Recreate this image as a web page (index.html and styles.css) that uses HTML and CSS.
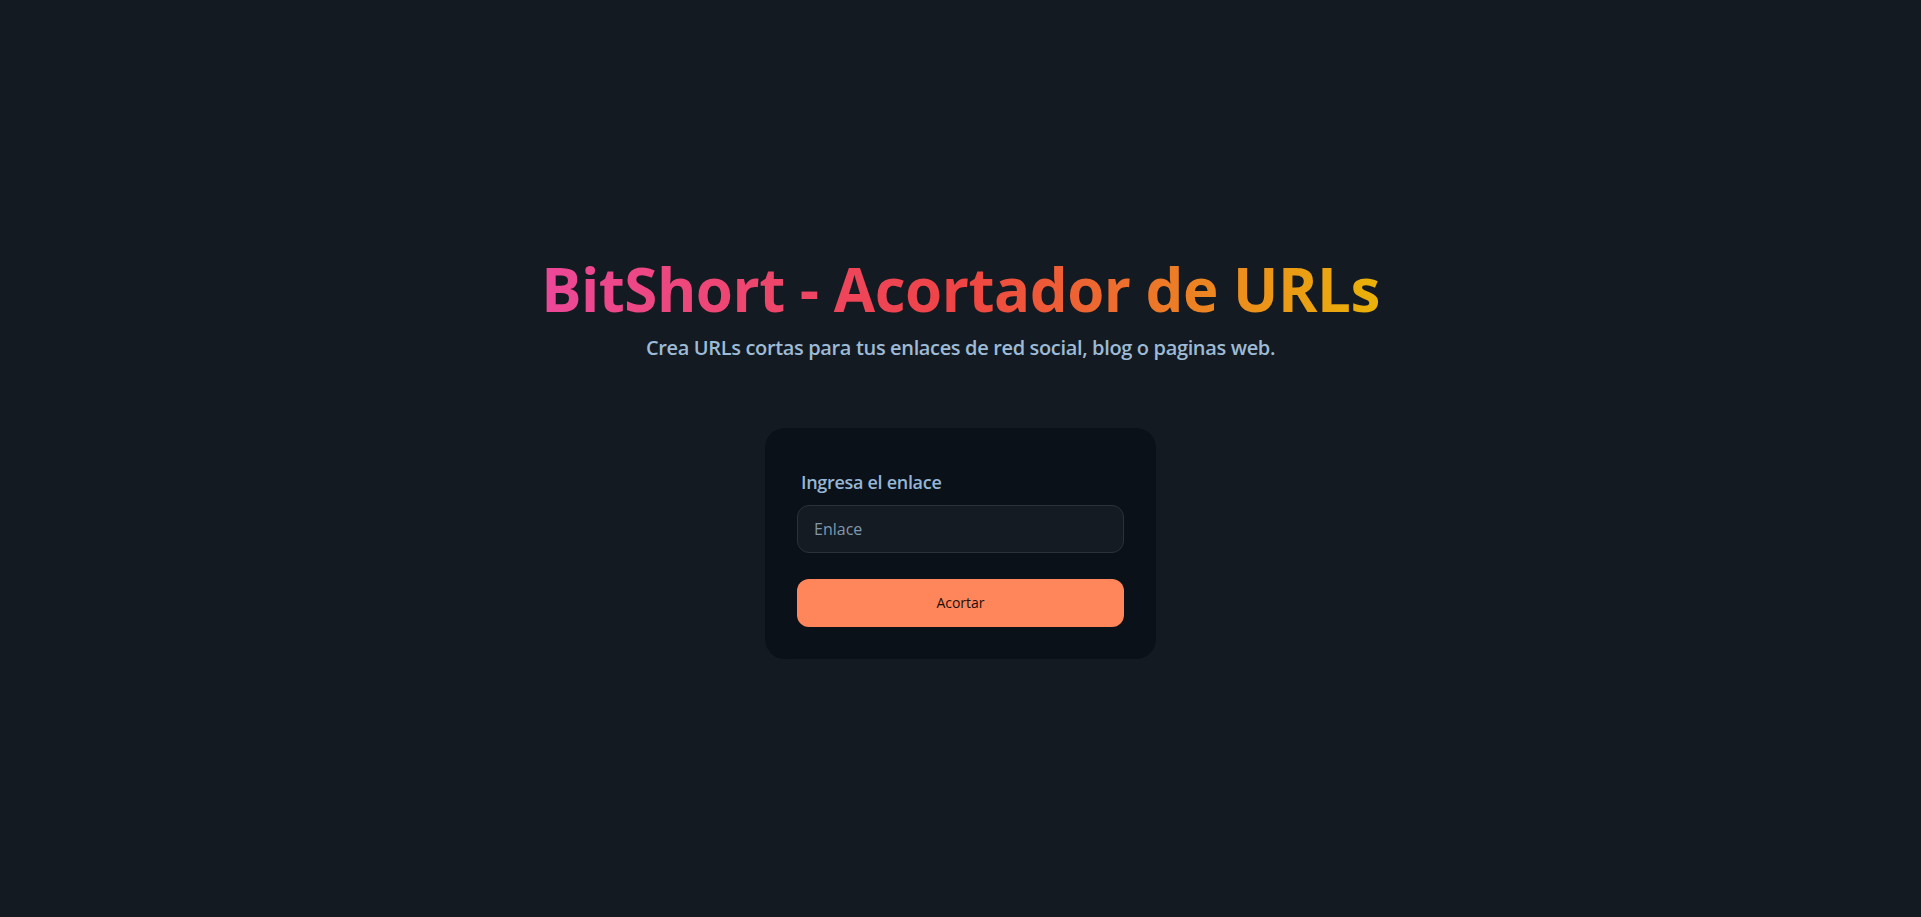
FILE: index.html
```html
<!DOCTYPE html>
<html lang="es">
<head>
<meta charset="utf-8">
<title>BitShort - Acortador de URLs</title>
<link rel="stylesheet" href="styles.css">
</head>
<body>
<main class="page">
  <header class="hero">
    <h1 class="title">BitShort - Acortador de URLs</h1>
    <p class="subtitle">Crea URLs cortas para tus enlaces de red social, blog o paginas web.</p>
  </header>
  <form class="card">
    <label class="label" for="url">Ingresa el enlace</label>
    <input class="input" id="url" type="text" placeholder="Enlace">
    <button class="btn" type="button">Acortar</button>
  </form>
</main>
</body>
</html>
```
FILE: styles.css
```css
* { box-sizing: border-box; }
html, body { margin: 0; padding: 0; }
body {
  background: #141a21;
  color: #9fb9d0;
  font-family: "Open Sans", "Noto Sans", sans-serif;
}
.page {
  min-height: 100vh;
  display: flex;
  flex-direction: column;
  align-items: center;
  justify-content: center;
}
.hero {
  display: flex;
  flex-direction: column;
  align-items: center;
}
.title {
  margin: 0;
  font-size: 60px;
  line-height: 60px;
  font-weight: 700;
  letter-spacing: -0.5px;
  background: linear-gradient(90deg, #ec4899 0%, #ef4444 50%, #eab308 100%);
  -webkit-background-clip: text;
  background-clip: text;
  color: transparent;
}
.subtitle {
  margin: 15px 0 0;
  font-size: 20px;
  line-height: 28px;
  font-weight: 600;
  letter-spacing: -0.35px;
  color: #9dbbd6;
}
.card {
  margin-top: 66px;
  width: 391px;
  padding: 32px;
  background: #0b1118;
  border-radius: 20px;
  display: flex;
  flex-direction: column;
}
.label {
  padding: 8px 4px;
  font-size: 18px;
  line-height: 28px;
  font-weight: 600;
  letter-spacing: -0.3px;
  color: #95b6d6;
}
.input {
  margin-top: 1px;
  height: 48px;
  width: 100%;
  padding: 0 16px;
  border: 1px solid #2a323b;
  border-radius: 12px;
  background: #141b22;
  color: #9fb9d0;
  font-family: inherit;
  font-size: 16px;
  outline: none;
}
.input::placeholder { color: #8198ad; }
.btn {
  margin-top: 26px;
  height: 48px;
  width: 100%;
  border: none;
  border-radius: 12px;
  background: #ff865b;
  color: #1a0f0b;
  font-family: inherit;
  font-size: 14px;
  font-weight: 500;
  cursor: pointer;
}
```
